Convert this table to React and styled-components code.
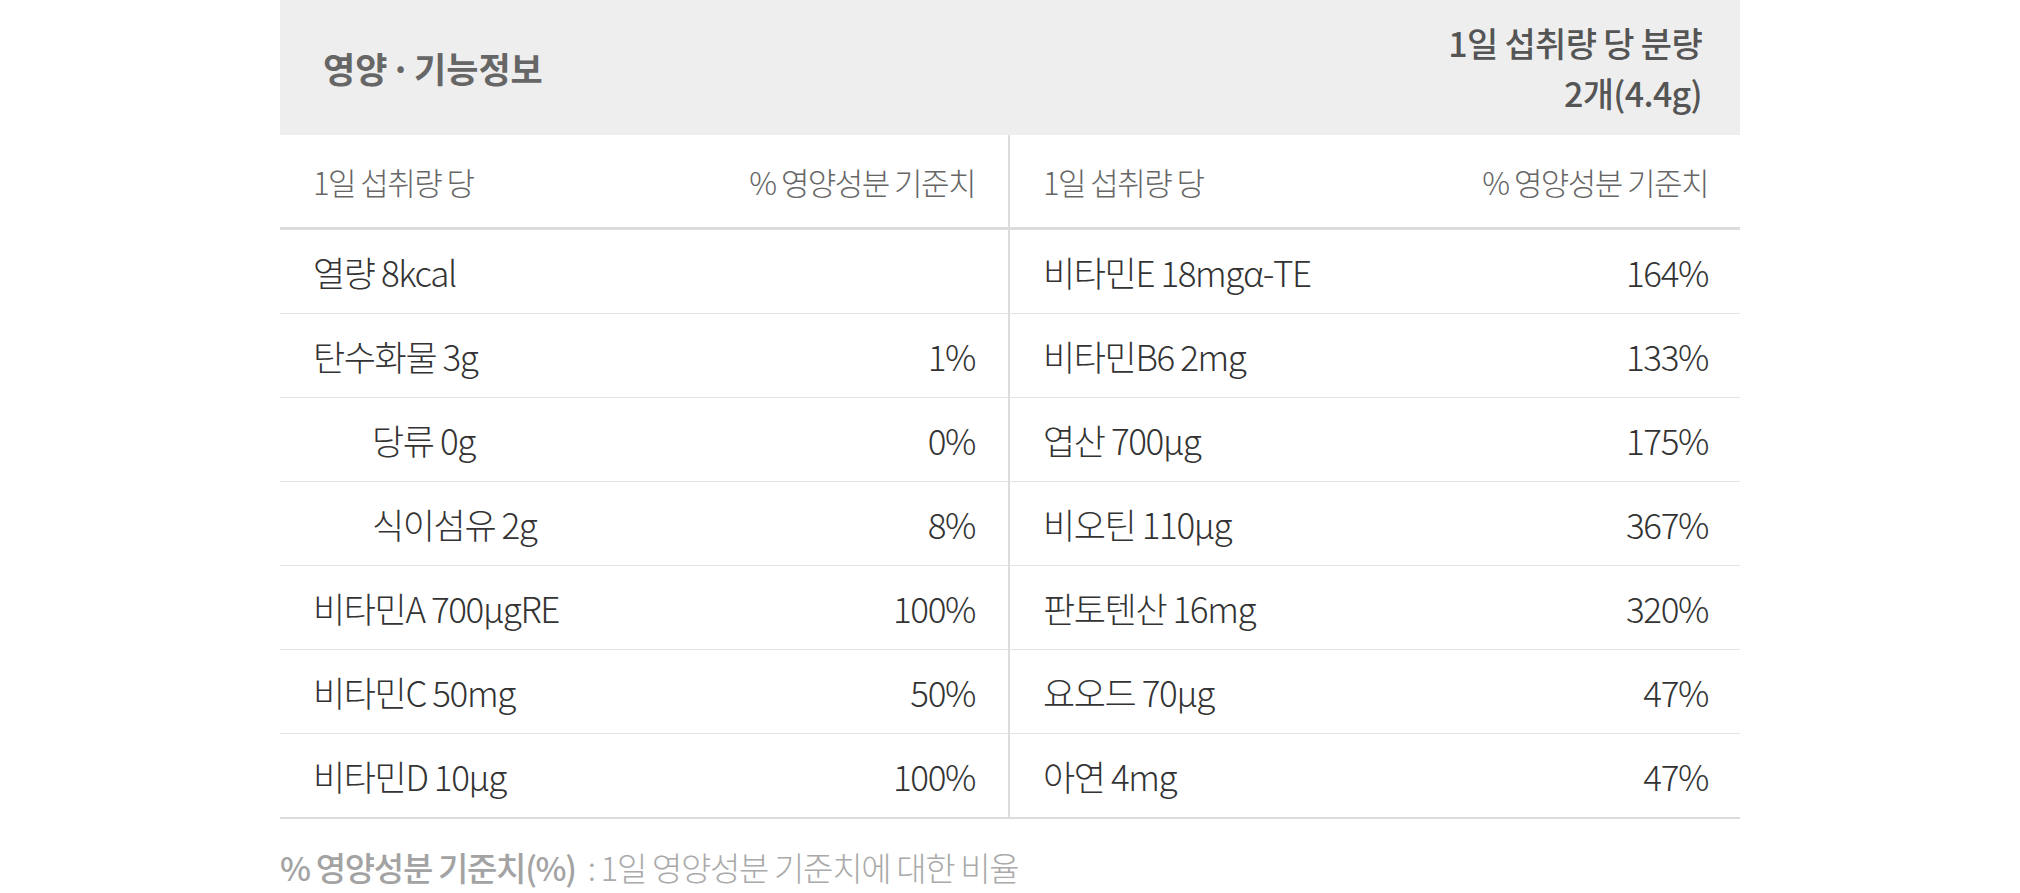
import React from "react";
import styled, { createGlobalStyle } from "styled-components";

const Global = createGlobalStyle`
  html, body { margin: 0; padding: 0; background: #fff; }
  body { font-family: "Noto Sans CJK KR", "Noto Sans", sans-serif; }
`;

const Wrap = styled.div`
  width: 1460px;
  margin: 0 auto;
`;

const Header = styled.div`
  height: 135px;
  box-sizing: border-box;
  background: #eeeeee;
  display: flex;
  align-items: center;
  justify-content: space-between;
  padding: 0 38px 0 43px;
`;

const Title = styled.h2`
  margin: 0;
  font-size: 35px;
  font-weight: 700;
  color: #666;
  letter-spacing: 0;
  word-spacing: -5px;
`;

const Serving = styled.div`
  text-align: right;
  font-size: 34px;
  font-weight: 500;
  line-height: 50px;
  color: #555;
  letter-spacing: -0.02em;
`;

const Body = styled.div`
  display: grid;
  grid-template-columns: 730px 1fr;
  border-bottom: 2px solid #dcdcdc;
`;

const Half = styled.div`
  display: flex;
  flex-direction: column;
  border-right: ${(p) => (p.$divider ? "2px solid #dcdcdc" : "none")};
`;

const ColHead = styled.div`
  height: 92px;
  border-bottom: 3px solid #dcdcdc;
  display: flex;
  align-items: center;
  justify-content: space-between;
  padding: 0 ${(p) => (p.$divider ? "33px" : "32px")} 0 33px;
  font-size: 31px;
  font-weight: 300;
  color: #666;
  letter-spacing: -0.05em;
`;

const Row = styled.div`
  height: 83px;
  border-bottom: ${(p) => (p.$last ? "none" : "1px solid #e3e3e3")};
  display: flex;
  align-items: center;
  justify-content: space-between;
  padding: 0 ${(p) => (p.$divider ? "33px" : "32px")} 0 ${(p) => (p.$indent ? "92px" : "33px")};
  font-size: 35px;
  font-weight: 300;
  color: #333;
  letter-spacing: -0.04em;
`;

const Footer = styled.p`
  margin: 24px 0 0;
  font-size: 33px;
  font-weight: 300;
  color: #aaa;
  letter-spacing: -0.04em;
`;

const FootStrong = styled.strong`
  font-weight: 500;
  color: #a3a3a3;
  margin-right: 12px;
`;

const left = [
  ["열량 8kcal", ""],
  ["탄수화물 3g", "1%"],
  ["당류 0g", "0%", true],
  ["식이섬유 2g", "8%", true],
  ["비타민A 700μgRE", "100%"],
  ["비타민C 50mg", "50%"],
  ["비타민D 10μg", "100%"],
];

const right = [
  ["비타민E 18mgα-TE", "164%"],
  ["비타민B6 2mg", "133%"],
  ["엽산 700μg", "175%"],
  ["비오틴 110μg", "367%"],
  ["판토텐산 16mg", "320%"],
  ["요오드 70μg", "47%"],
  ["아연 4mg", "47%"],
];

function Column({ rows, divider }) {
  return (
    <Half $divider={divider}>
      <ColHead $divider={divider}>
        <span>1일 섭취량 당</span>
        <span>% 영양성분 기준치</span>
      </ColHead>
      {rows.map(([name, pct, indent], i) => (
        <Row key={name} $divider={divider} $indent={indent} $last={i === rows.length - 1}>
          <span>{name}</span>
          <span>{pct}</span>
        </Row>
      ))}
    </Half>
  );
}

export default function App() {
  return (
    <>
      <Global />
      <Wrap>
        <Header>
          <Title>영양 · 기능정보</Title>
          <Serving>
            1일 섭취량 당 분량
            <br />
            2개(4.4g)
          </Serving>
        </Header>
        <Body>
          <Column rows={left} divider />
          <Column rows={right} />
        </Body>
        <Footer>
          <FootStrong>% 영양성분 기준치(%)</FootStrong>: 1일 영양성분 기준치에 대한 비율
        </Footer>
      </Wrap>
    </>
  );
}
